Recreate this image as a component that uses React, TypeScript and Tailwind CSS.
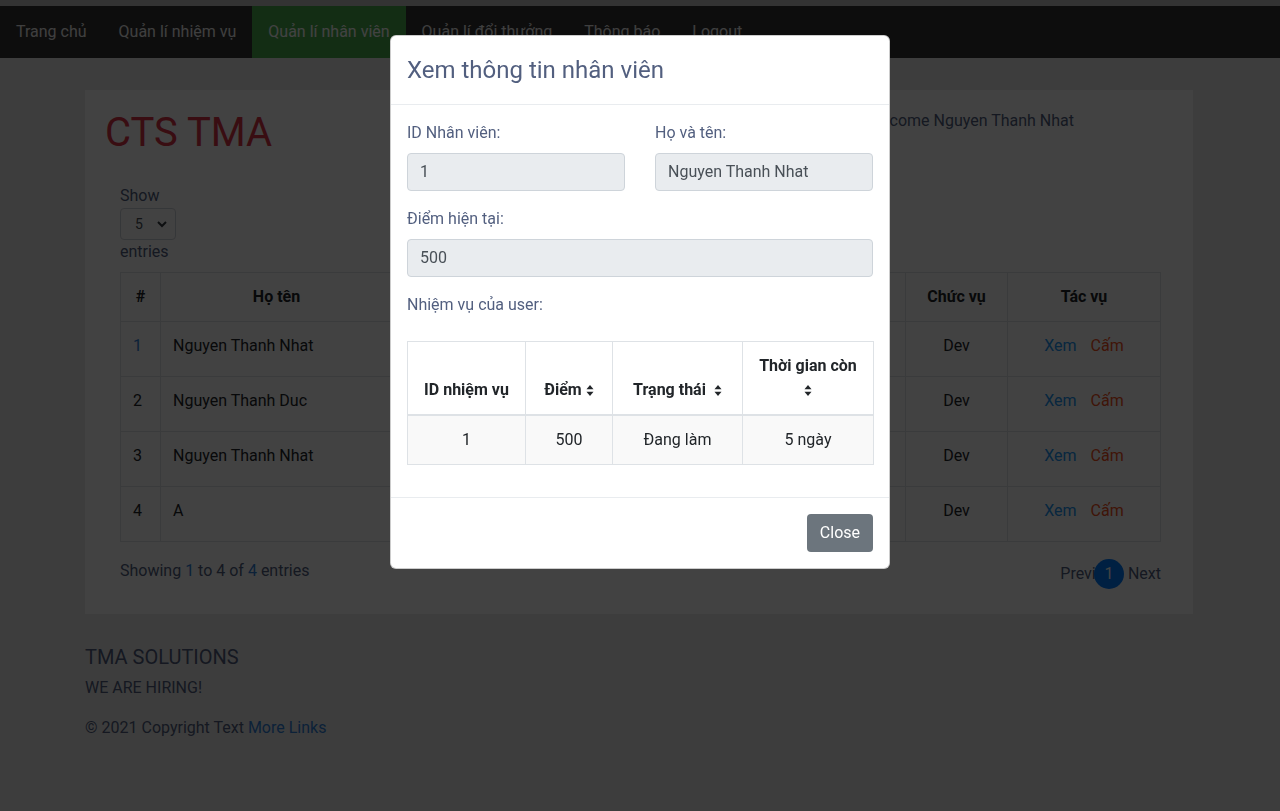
import React from 'react';

const NAV = ['Trang chủ', 'Quản lí nhiệm vụ', 'Quản lí nhân viên', 'Quản lí đổi thưởng', 'Thông báo', 'Logout'];

const USERS = [
  { id: 1, name: 'Nguyen Thanh Nhat' },
  { id: 2, name: 'Nguyen Thanh Duc' },
  { id: 3, name: 'Nguyen Thanh Nhat' },
  { id: 4, name: 'A' },
];

function SortIcon() {
  return (
    <svg width="8" height="11" viewBox="0 0 8 11" className="inline-block align-[-1px]" fill="#212529">
      <path d="M4 0 L7.5 4.2 H0.5 Z" />
      <path d="M0.5 6.8 H7.5 L4 11 Z" />
    </svg>
  );
}

function Modal() {
  return (
    <div className="fixed top-[35px] left-1/2 -translate-x-1/2 w-[500px] bg-white rounded-[6px] border border-black/20 text-[#525f7f]">
      <div className="px-4 py-4 border-b border-[#e9ecef]">
        <h5 className="text-[24px] leading-[36px]">Xem thông tin nhân viên</h5>
      </div>
      <div className="p-4">
        <div className="grid grid-cols-2 gap-[30px]">
          <div>
            <label className="block mb-2 leading-6">ID Nhân viên:</label>
            <div className="h-[38px] rounded border border-[#ced4da] bg-[#e9ecef] px-3 flex items-center text-[#495057]">1</div>
          </div>
          <div>
            <label className="block mb-2 leading-6">Họ và tên:</label>
            <div className="h-[38px] rounded border border-[#ced4da] bg-[#e9ecef] px-3 flex items-center text-[#495057]">Nguyen Thanh Nhat</div>
          </div>
        </div>
        <div className="mt-4">
          <label className="block mb-2 leading-6">Điểm hiện tại:</label>
          <div className="h-[38px] rounded border border-[#ced4da] bg-[#e9ecef] px-3 flex items-center text-[#495057]">500</div>
        </div>
        <div className="mt-4">
          <label className="block leading-6">Nhiệm vụ của user:</label>
        </div>
        <table className="mt-6 mb-4 w-full table-fixed border-collapse text-[#212529] text-center">
          <colgroup>
            <col className="w-[118px]" />
            <col className="w-[87px]" />
            <col className="w-[130px]" />
            <col className="w-[131px]" />
          </colgroup>
          <thead>
            <tr>
              <th className="border border-[#dee2e6] border-b-2 p-3 align-bottom font-bold leading-6">ID nhiệm vụ</th>
              <th className="border border-[#dee2e6] border-b-2 p-3 align-bottom font-bold leading-6 whitespace-nowrap">
                Điểm <SortIcon />
              </th>
              <th className="border border-[#dee2e6] border-b-2 p-3 align-bottom font-bold leading-6 whitespace-nowrap">
                Trạng thái&nbsp; <SortIcon />
              </th>
              <th className="border border-[#dee2e6] border-b-2 p-3 align-bottom font-bold leading-6">
                <div>Thời gian còn</div>
                <div className="h-6 flex items-center justify-center">
                  <SortIcon />
                </div>
              </th>
            </tr>
          </thead>
          <tbody>
            <tr className="bg-[#f9f9f9]">
              <td className="border border-[#dee2e6] p-3 leading-6">1</td>
              <td className="border border-[#dee2e6] p-3 leading-6">500</td>
              <td className="border border-[#dee2e6] p-3 leading-6">Đang làm</td>
              <td className="border border-[#dee2e6] p-3 leading-6">5 ngày</td>
            </tr>
          </tbody>
        </table>
      </div>
      <div className="px-4 py-4 border-t border-[#e9ecef] flex justify-end">
        <button className="h-[38px] px-[13px] rounded bg-[#6c757d] text-white leading-6">Close</button>
      </div>
    </div>
  );
}

export default function App() {
  return (
    <div className="min-h-[811px] bg-[#ececec] font-['Roboto','Liberation_Sans',sans-serif] text-[16px] text-[#525f7f]">
      <div className="h-[6px] bg-[#c4c4c4]" />
      <nav className="flex bg-[#333333]">
        {NAV.map((n) => (
          <a
            key={n}
            className={`px-4 py-[14px] leading-6 text-[#f2f2f2] ${n === 'Quản lí nhân viên' ? 'bg-[#4CAF50] text-white' : ''}`}
          >
            {n}
          </a>
        ))}
      </nav>

      <div className="ml-[85px] mt-[32px] w-[1108px] bg-white px-5 pt-[19px] pb-[25px]">
        <div className="flex justify-between items-start">
          <h1 className="text-[40px] leading-[1.2] text-[#dc3545]">CTS TMA</h1>
          <div className="pr-[99px] leading-6">Welcome Nguyen Thanh Nhat</div>
        </div>

        <div className="mt-[27px] px-[15px]">
          <div className="leading-6">Show</div>
          <div className="w-[56px] h-[32px] rounded border border-[#ced4da] flex items-center justify-between pl-[14px] pr-[8px] text-[14px] text-[#495057]">
            <span>5</span>
            <svg width="10" height="8" viewBox="0 0 10 8" fill="none" stroke="#343a40" strokeWidth="2">
              <path d="M1 2 L5 6 L9 2" />
            </svg>
          </div>
          <div className="leading-6">entries</div>

          <table className="mt-[8px] w-full table-fixed border-collapse text-[#212529]">
            <colgroup>
              <col className="w-[40px]" />
              <col className="w-[232px]" />
              <col className="w-[200px]" />
              <col className="w-[170px]" />
              <col className="w-[143px]" />
              <col className="w-[102px]" />
              <col className="w-[153px]" />
            </colgroup>
            <thead>
              <tr>
                {['#', 'Họ tên', 'Email', 'Số điện thoại', 'Điểm', 'Chức vụ', 'Tác vụ'].map((h) => (
                  <th key={h} className="border border-[#dee2e6] px-3 py-3 font-bold leading-6 text-center">
                    {h}
                  </th>
                ))}
              </tr>
            </thead>
            <tbody>
              {USERS.map((u) => (
                <tr key={u.id} className="h-[55px]">
                  <td className={`border border-[#dee2e6] px-3 py-3 align-top leading-6 ${u.id === 1 ? 'text-[#2f7fd8]' : ''}`}>{u.id}</td>
                  <td className="border border-[#dee2e6] px-3 py-3 align-top leading-6">{u.name}</td>
                  <td className="border border-[#dee2e6] px-3 py-3 align-top leading-6">nhat@tma.com.vn</td>
                  <td className="border border-[#dee2e6] px-3 py-3 align-top leading-6">0123456789</td>
                  <td className="border border-[#dee2e6] px-3 py-3 align-top leading-6 text-center">500</td>
                  <td className="border border-[#dee2e6] px-3 py-3 align-top leading-6 text-center">Dev</td>
                  <td className="border border-[#dee2e6] px-3 py-3 align-top leading-6 text-center">
                    <span className="text-[#2196f3]">Xem</span>
                    <span className="ml-[14px] text-[#f4511e]">Cấm</span>
                  </td>
                </tr>
              ))}
            </tbody>
          </table>

          <div className="mt-[17px] flex justify-between items-start">
            <div className="leading-6">
              Showing <span className="text-[#2f7fd8]">1</span> to 4 of <span className="text-[#2f7fd8]">4</span> entries
            </div>
            <div className="-mr-[3px] flex items-center h-[30px]">
              <span className="leading-6">Previous</span>
              <span className="relative -ml-[28px] w-[30px] h-[30px] rounded-full bg-[#007bff] text-white flex items-center justify-center">1</span>
              <span className="ml-[4px] leading-6">Next</span>
            </div>
          </div>
        </div>
      </div>

      <footer className="ml-[85px] mt-[31px]">
        <div className="text-[20px] leading-6">TMA SOLUTIONS</div>
        <div className="mt-[7px] leading-6">WE ARE HIRING!</div>
        <div className="mt-4 leading-6">
          © 2021 Copyright Text <a className="text-[#2f7fd8]">More Links</a>
        </div>
      </footer>

      <div className="fixed inset-0 bg-black/[0.74]" />
      <Modal />
    </div>
  );
}
